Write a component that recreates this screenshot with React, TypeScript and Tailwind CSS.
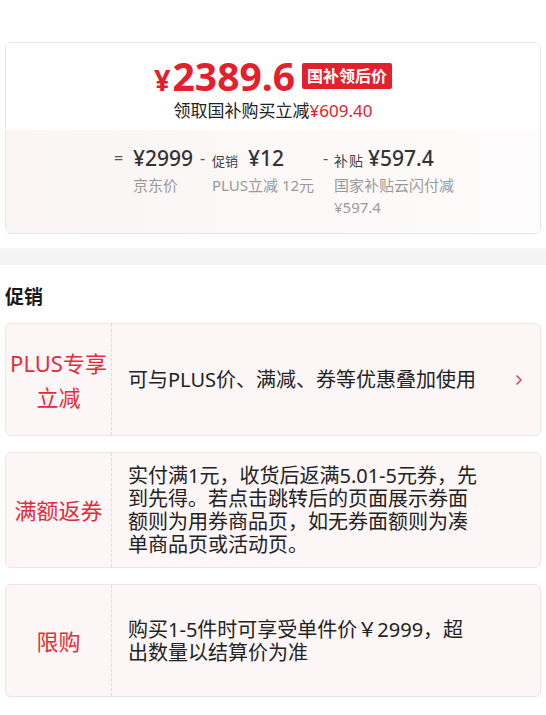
import React from 'react';
import { ChevronRight } from 'lucide-react';

const font = "font-['Noto_Sans','Noto_Sans_CJK_SC',sans-serif]";

type Promo = { label: React.ReactNode; text: string; arrow?: boolean };

const promos: Promo[] = [
  {
    label: (
      <>
        PLUS专享
        <br />
        立减
      </>
    ),
    text: '可与PLUS价、满减、券等优惠叠加使用',
    arrow: true,
  },
  {
    label: '满额返券',
    text: '实付满1元，收货后返满5.01-5元券，先到先得。若点击跳转后的页面展示券面额则为用券商品页，如无券面额则为凑单商品页或活动页。',
  },
  {
    label: '限购',
    text: '购买1-5件时可享受单件价￥2999，超出数量以结算价为准',
  },
];

const App: React.FC = () => {
  return (
    <div className={`${font} min-h-screen bg-white pt-[42px] pb-[20px] text-[#333]`}>
      {/* Price card */}
      <div className="mx-[5px] overflow-hidden rounded-[6px] border border-[#ebe6e6]">
        <div className="flex flex-col items-center bg-white pt-[18px] pb-[9px]">
          <div className="flex h-[30px] items-center">
            <span className="flex h-[30px] items-baseline font-bold leading-[30px] text-[#e3202d]">
              <span className="text-[29px]">¥</span>
              <span className="ml-[2px] text-[39px]">2389.6</span>
            </span>
            <span className="ml-[7px] h-[26px] rounded-[2px] bg-[#e3202d] px-[5px] text-[16px] font-bold leading-[26px] text-white">
              国补领后价
            </span>
          </div>
          <div className="mt-[10px] h-[20px] text-[17px] leading-[20px] text-[#222]">
            领取国补购买立减<span className="text-[#e3202d]">¥609.40</span>
          </div>
        </div>

        <div className="flex bg-gradient-to-r from-[#fbf5f5] to-[#fdfbfb] pt-[16px] pb-[15px] pl-[108px]">
          {/* JD price */}
          <div className="flex w-[86px]">
            <span className="w-[19px] text-[16px] leading-[24px] text-[#555]">=</span>
            <div>
              <div className="h-[24px] text-[21px] font-medium leading-[24px] text-[#333]">¥2999</div>
              <div className="mt-[4px] text-[15px] leading-[22px] text-[#999]">京东价</div>
            </div>
          </div>
          {/* promotion */}
          <div className="flex w-[123px]">
            <span className="w-[12px] text-[16px] leading-[24px] text-[#555]">-</span>
            <div>
              <div className="flex h-[24px] items-baseline leading-[24px]">
                <span className="text-[13px] text-[#444]">促销</span>
                <span className="ml-[10px] text-[21px] font-medium text-[#333]">¥12</span>
              </div>
              <div className="mt-[4px] text-[15px] leading-[22px] text-[#999]">PLUS立减 12元</div>
            </div>
          </div>
          {/* subsidy */}
          <div className="flex">
            <span className="w-[11px] text-[16px] leading-[24px] text-[#555]">-</span>
            <div>
              <div className="flex h-[24px] items-baseline leading-[24px]">
                <span className="text-[14px] tracking-[1px] text-[#444]">补贴</span>
                <span className="ml-[4px] text-[21px] font-medium text-[#333]">¥597.4</span>
              </div>
              <div className="mt-[4px] w-[122px] text-[15px] leading-[22px] text-[#999]">
                国家补贴云闪付减 ¥597.4
              </div>
            </div>
          </div>
        </div>
      </div>

      {/* Section divider */}
      <div className="mt-[14px] h-[17px] bg-gradient-to-b from-[#f6f6f8] to-[#f2f2f4]"></div>

      {/* Promotions */}
      <div className="px-[5px] pt-[19px]">
        <h2 className="mb-[13px] text-[19px] font-bold leading-[26px] text-[#1a1a1a]">促销</h2>
        <div className="flex flex-col gap-[16px]">
          {promos.map((p, i) => (
            <div
              key={i}
              className="flex min-h-[113px] overflow-hidden rounded-[6px] border border-[#efe3e3] bg-[#fdf6f6]"
            >
              <div className="flex w-[106px] shrink-0 items-center justify-center border-r border-dashed border-[#e6d6d6] text-center text-[22px] leading-[34px] text-[#e12d3b]">
                <span>{p.label}</span>
              </div>
              <div className="flex flex-1 items-center py-[11px] pl-[16px]">
                <p className="w-[350px] text-[20px] leading-[23px] text-[#222]">{p.text}</p>
                <div className="flex flex-1 justify-end pr-[13px]">
                  {p.arrow && <ChevronRight size={16} strokeWidth={2.5} className="text-[#d8455c]" />}
                </div>
              </div>
            </div>
          ))}
        </div>
      </div>
    </div>
  );
};

export default App;
